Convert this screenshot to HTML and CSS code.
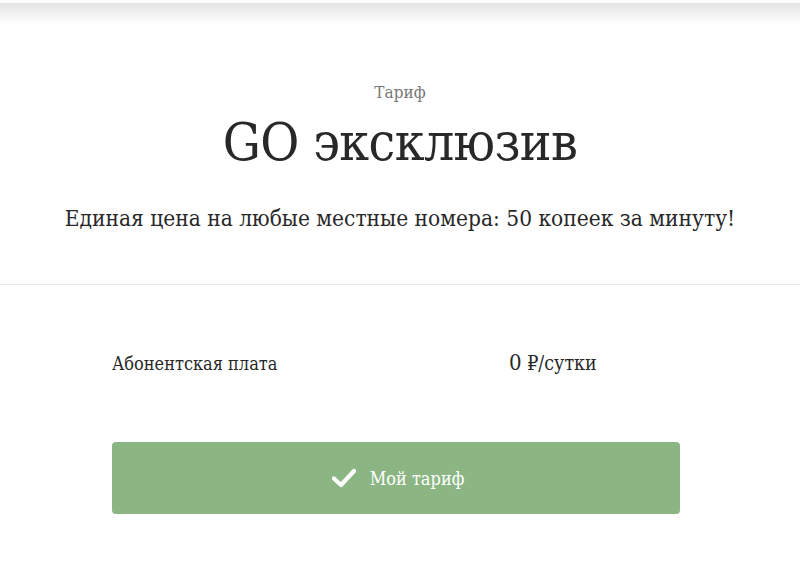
FILE: index.html
```html
<!DOCTYPE html>
<html lang="ru">
<head>
<meta charset="utf-8">
<link rel="stylesheet" href="styles.css">
</head>
<body>
<div class="topshadow"></div>
<section class="hero">
  <div class="kicker">Тариф</div>
  <h1 class="title">GO эксклюзив</h1>
  <p class="lead">Единая цена на любые местные номера: 50 копеек за минуту!</p>
</section>
<section class="details">
  <div class="row">
    <div class="label">Абонентская плата</div>
    <div class="value"><span class="num">0</span> ₽/сутки</div>
  </div>
  <button class="btn" type="button">
    <svg class="check" width="24" height="20" viewBox="0 0 24 20"><path d="M2 10.5 L9 17 L22 3" fill="none" stroke="#fff" stroke-width="4.2" stroke-linecap="round" stroke-linejoin="round"/></svg>
    <span>Мой тариф</span>
  </button>
</section>
</body>
</html>
```
FILE: styles.css
```css
html, body {
  margin: 0;
  padding: 0;
  background: #fff;
}
body {
  font-family: "DejaVu Serif Condensed", "DejaVu Serif", serif;
  color: #282828;
  width: 800px;
  height: 561px;
  overflow: hidden;
}
.topshadow {
  margin-top: 3px;
  height: 22px;
  background: linear-gradient(#e4e4e4, rgba(255,255,255,0));
}
.hero {
  text-align: center;
  padding-top: 57px;
  height: 260px;
  box-sizing: border-box;
  border-bottom: 1px solid #ebebeb;
}
.kicker {
  font-size: 17px;
  color: #777;
  line-height: 20px;
}
.title {
  margin: 10px 0 0;
  font-weight: normal;
  font-size: 53px;
  line-height: 60px;
  letter-spacing: -0.6px;
}
.lead {
  margin: 32px 0 0;
  font-size: 22.5px;
  line-height: 28px;
}
.details {
  padding: 67px 0 0 112px;
}
.row {
  display: flex;
  width: 500px;
  font-size: 18px;
  line-height: 22px;
  align-items: baseline;
}
.label {
  width: 397px;
}
.value {
  font-size: 19.5px;
}
.num {
  font-size: 22px;
}
.btn {
  margin-top: 67px;
  width: 568px;
  height: 72px;
  border: 0;
  border-radius: 4px;
  background: #8bb683;
  color: #fff;
  font-family: inherit;
  font-size: 18px;
  display: flex;
  align-items: center;
  justify-content: center;
  gap: 14px;
  padding: 0 0 0 4px;
}
.check {
  display: block;
}
```
